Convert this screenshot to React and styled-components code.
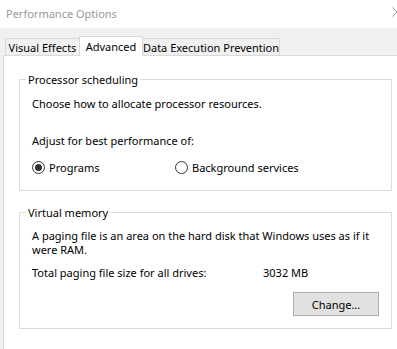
import React from "react";
import styled, { createGlobalStyle } from "styled-components";

const Global = createGlobalStyle`
  html, body { margin: 0; padding: 0; background: #f0f0f0; overflow: hidden; }
  body { font-family: "Segoe UI", "Noto Sans", "Open Sans", sans-serif; font-size: 11px; color: #000; }
  * { box-sizing: border-box; }
`;

const Window = styled.div`
  width: 397px;
  height: 349px;
  background: #f0f0f0;
  overflow: hidden;
`;

const TitleBar = styled.div`
  width: 420px;
  height: 28px;
  background: #fff;
  display: flex;
  align-items: flex-start;
  justify-content: space-between;
  padding: 0 18px 0 6px;
`;

const Title = styled.div`
  color: #999;
  font-size: 11px;
  line-height: 15px;
  margin-top: 6px;
`;

const CloseIcon = styled.svg`
  margin-top: 7px;
  flex: none;
`;

const TabStrip = styled.div`
  display: flex;
  align-items: flex-end;
  height: 20px;
  margin: 8px 0 -1px 5px;
  position: relative;
  z-index: 1;
`;

const Tab = styled.div`
  width: ${(p) => p.$w}px;
  height: ${(p) => (p.$active ? 20 : 17)}px;
  margin-bottom: ${(p) => (p.$active ? 0 : 1)}px;
  margin-left: ${(p) => (p.$first ? 0 : -1)}px;
  position: relative;
  z-index: ${(p) => (p.$active ? 2 : 1)};
  background: ${(p) => (p.$active ? "#fff" : "#f0f0f0")};
  border: 1px solid #d9d9d9;
  border-bottom: none;
  display: flex;
  align-items: center;
  justify-content: center;
  line-height: 15px;
  white-space: nowrap;
  padding-bottom: ${(p) => (p.$active ? 1 : 0)}px;
`;

const Panel = styled.div`
  margin-left: 3px;
  width: 410px;
  height: 300px;
  background: #fff;
  border: 1px solid #d9d9d9;
  padding: 16px 15px;
  position: relative;
  z-index: 0;
`;

const Group = styled.fieldset`
  width: 373px;
  margin: ${(p) => (p.$gap ? "14px 0 0" : "0")};
  border: 1px solid #dcdcdc;
  padding: 0 12px ${(p) => p.$pb}px;
  min-width: 0;
`;

const Legend = styled.legend`
  padding: 0 2px;
  margin-left: -6px;
  line-height: 15px;
`;

const Text = styled.div`
  line-height: ${(p) => p.$lh || 15}px;
  margin-top: ${(p) => p.$mt || 0}px;
  white-space: nowrap;
`;

const RadioRow = styled.div`
  display: grid;
  grid-template-columns: 143px auto;
  margin-top: ${(p) => p.$mt}px;
`;

const RadioLabel = styled.label`
  display: flex;
  align-items: center;
  gap: 4px;
  line-height: 15px;
`;

const RadioCircle = styled.span`
  width: 13px;
  height: 13px;
  border-radius: 50%;
  border: 1px solid #333;
  display: flex;
  align-items: center;
  justify-content: center;
  flex: none;
  &::after {
    content: "";
    width: 7px;
    height: 7px;
    border-radius: 50%;
    background: ${(p) => (p.$checked ? "#333" : "transparent")};
  }
`;

const InfoRow = styled.div`
  display: grid;
  grid-template-columns: 231px auto;
  line-height: 15px;
  margin-top: ${(p) => p.$mt}px;
`;

const ButtonRow = styled.div`
  display: flex;
  justify-content: flex-end;
  margin-top: ${(p) => p.$mt}px;
`;

const Button = styled.button`
  width: 86px;
  height: 24px;
  background: #e1e1e1;
  border: 1px solid #adadad;
  font-family: inherit;
  font-size: 11px;
  color: #000;
  padding: 0;
  line-height: 15px;
`;

const Radio = ({ checked, children }) => (
  <RadioLabel>
    <RadioCircle $checked={checked} />
    <span>{children}</span>
  </RadioLabel>
);

export default function App() {
  return (
    <>
      <Global />
      <Window>
        <TitleBar>
          <Title>Performance Options</Title>
          <CloseIcon width="10" height="10" viewBox="0 0 10 10">
            <path d="M0.5 0.5 L9.5 9.5 M9.5 0.5 L0.5 9.5" stroke="#999" strokeWidth="1" fill="none" />
          </CloseIcon>
        </TitleBar>
        <TabStrip>
          <Tab $w={75} $first>Visual Effects</Tab>
          <Tab $w={64} $active>Advanced</Tab>
          <Tab $w={138}>Data Execution Prevention</Tab>
        </TabStrip>
        <Panel>
          <Group $pb={15}>
            <Legend>Processor scheduling</Legend>
            <Text $mt={9}>Choose how to allocate processor resources.</Text>
            <Text $mt={22}>Adjust for best performance of:</Text>
            <RadioRow $mt={12}>
              <Radio checked>Programs</Radio>
              <Radio>Background services</Radio>
            </RadioRow>
          </Group>
          <Group $gap $pb={12}>
            <Legend>Virtual memory</Legend>
            <Text $mt={9} $lh={14}>
              A paging file is an area on the hard disk that Windows uses as if it
              <br />
              were RAM.
            </Text>
            <InfoRow $mt={8}>
              <span>Total paging file size for all drives:</span>
              <span>3032 MB</span>
            </InfoRow>
            <ButtonRow $mt={12}>
              <Button>Change...</Button>
            </ButtonRow>
          </Group>
        </Panel>
      </Window>
    </>
  );
}
